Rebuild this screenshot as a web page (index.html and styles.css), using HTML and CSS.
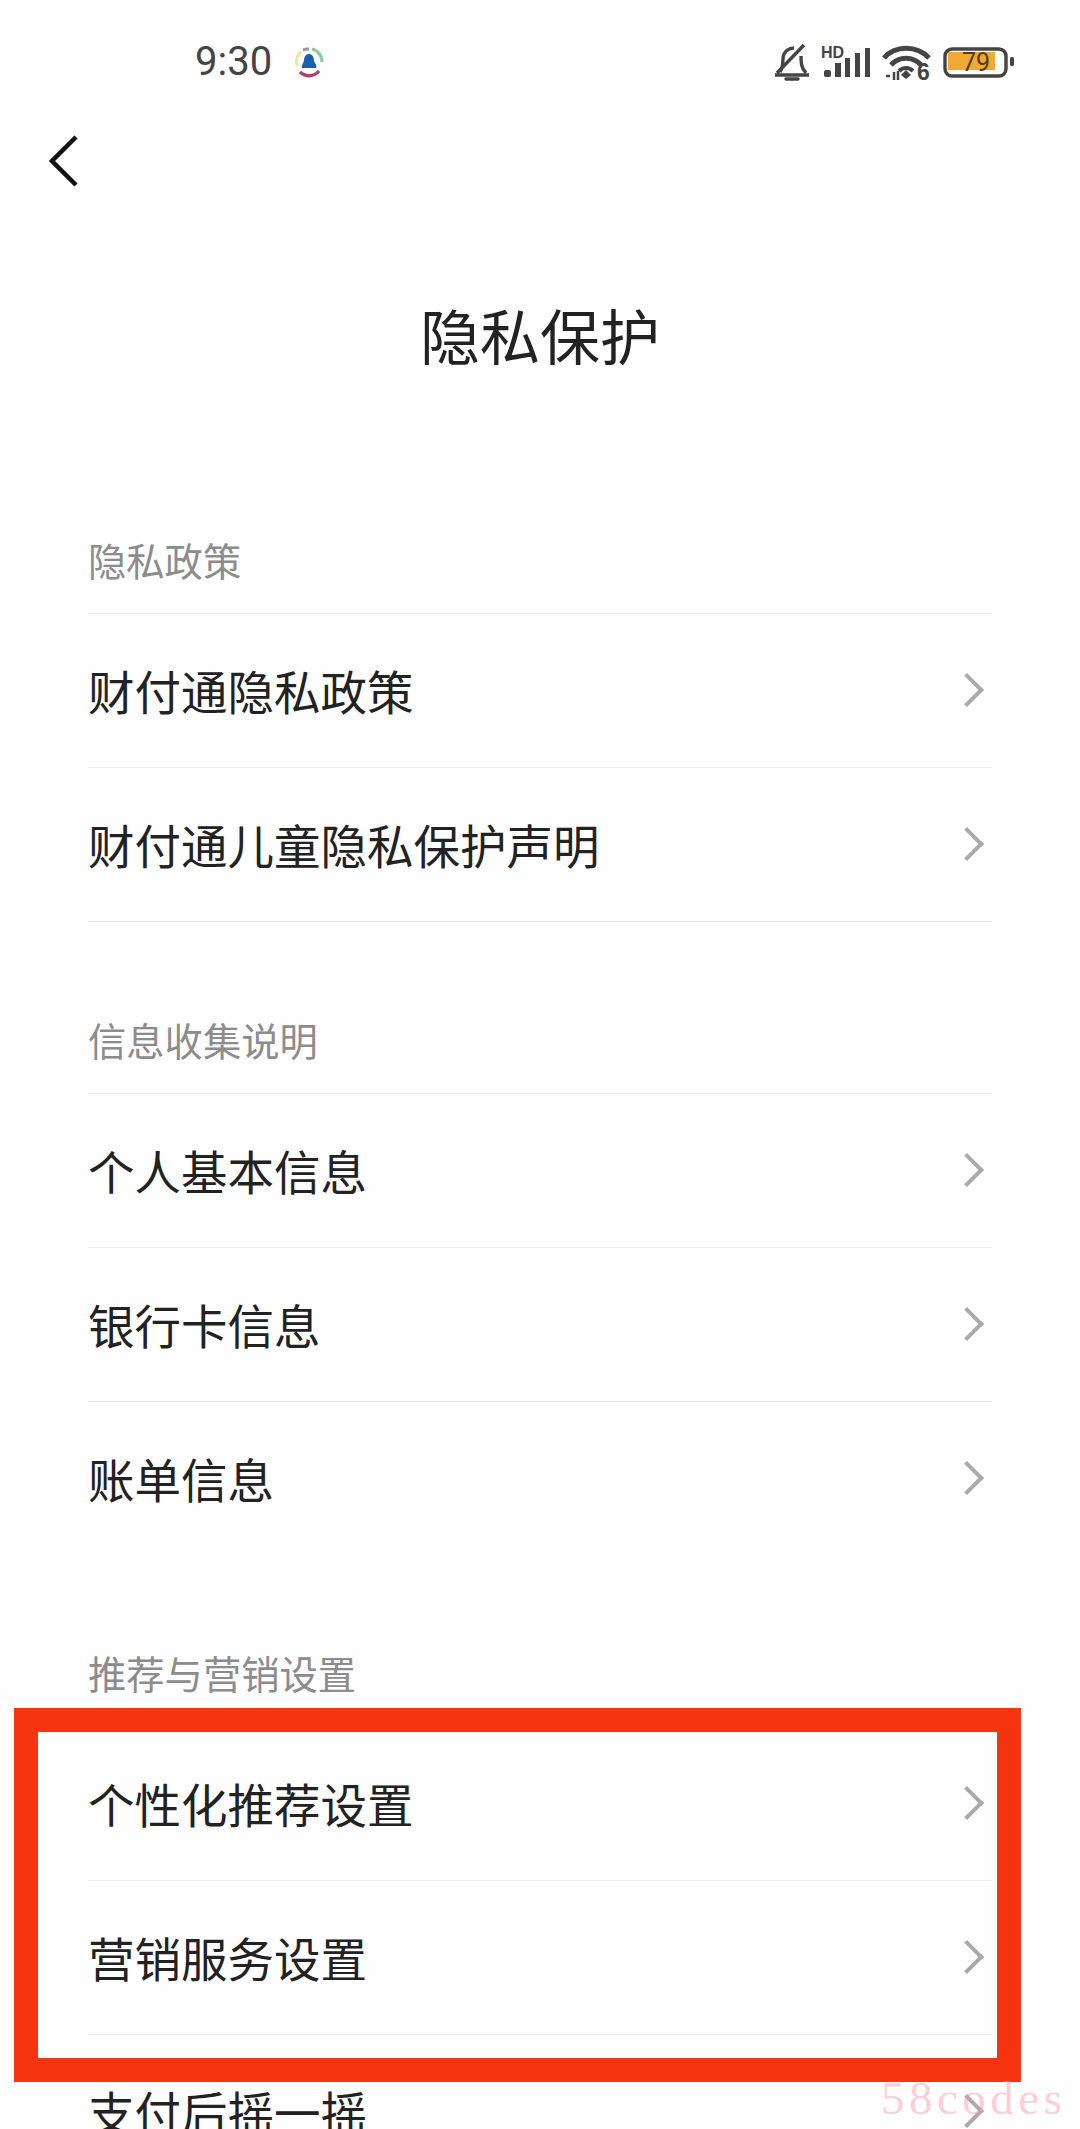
FILE: index.html
```html
<!DOCTYPE html>
<html lang="zh-CN">
<head>
    <meta charset="UTF-8">
    <meta name="viewport" content="width=device-width, initial-scale=1.0">
    <title>隐私保护</title>
    <link rel="stylesheet" href="styles.css">
</head>
<body>
    <div class="page">
        <div class="status-bar">
            <div class="status-left">
                <span class="time">9:30</span>
                <svg class="app-dot" width="34" height="34" viewBox="0 0 34 34" fill="none">
                    <path d="M5 21 A13 13 0 0 1 9 7" stroke="#f0e49a" stroke-width="3"/>
                    <path d="M11 5 A13 13 0 0 1 17 4" stroke="#9a9aa0" stroke-width="3"/>
                    <path d="M20 4 A13 13 0 0 1 30 17" stroke="#8cc9a0" stroke-width="3"/>
                    <path d="M8 27 A13 13 0 0 0 27 26" stroke="#b0406a" stroke-width="3.5"/>
                    <path d="M17 9 C21 9 22 13 22 16 C24 19 25 22 24 23 L10 23 C9 22 11 18 12 16 C12 13 13 9 17 9 Z" fill="#1f5fb0"/>
                </svg>
            </div>
            <div class="status-right">
                <svg width="36" height="46" viewBox="0 -3 36 46" fill="none" stroke="#444" stroke-width="3.4">
                    <path d="M6 30 C9 26 9 21 9 16 C10 9 15 6 20 6 M27 14 C27 20 27 26 32 31"/>
                    <path d="M1 33 H35"/>
                    <path d="M12 37 H24" stroke-linecap="round"/>
                    <path d="M30 3 L3 31"/>
                </svg>
                <svg width="50" height="46" viewBox="0 -3 50 46">
                    <text class="hd-text" x="0" y="16">HD</text>
                    <rect x="3" y="28" width="7" height="7" rx="2" fill="#444"/>
                    <rect x="14" y="21" width="6" height="14" fill="#444"/>
                    <rect x="24" y="16" width="5" height="19" fill="#444"/>
                    <rect x="34" y="11" width="5" height="24" fill="#444"/>
                    <rect x="44" y="6" width="5" height="29" fill="#444"/>
                </svg>
                <svg width="50" height="46" viewBox="0 -3 50 46" fill="none" stroke="#444" stroke-width="5">
                    <path d="M2 16 C13 3 35 3 47 16"/>
                    <path d="M9 23 C17 14 31 14 39 23"/>
                    <path d="M17 29 C21 25 27 25 31 29" stroke-width="4"/>
                    <path d="M19 33 L24 28 L29 33 L24 37 Z" fill="#444" stroke="none"/>
                    <path d="M4 34 H8 M12 30 V38 M16 29 V38" stroke-width="2.5"/>
                    <text class="wifi-six" x="35" y="38">6</text>
                </svg>
                <svg width="71" height="46" viewBox="0 -3 71 46" fill="none">
                    <rect x="5" y="10" width="47" height="18" fill="#f0a935"/>
                    <rect x="2" y="7" width="61" height="27" rx="7" stroke="#444" stroke-width="3.4"/>
                    <text class="batt-text" x="19" y="29">79</text>
                    <rect x="67" y="15" width="4" height="9" rx="1.5" fill="#444"/>
                </svg>
            </div>
        </div>

        <div class="nav">
            <svg width="30" height="54" viewBox="0 0 30 54" fill="none" stroke="#111" stroke-width="4.5">
                <path d="M27 2 L3 26 L27 50"/>
            </svg>
        </div>

        <h1 class="title">隐私保护</h1>

        <section class="group">
            <div class="group-label">隐私政策</div>
            <div class="row">财付通隐私政策<span class="arrow"></span></div>
            <div class="row">财付通儿童隐私保护声明<span class="arrow"></span></div>
        </section>

        <section class="group">
            <div class="group-label">信息收集说明</div>
            <div class="row">个人基本信息<span class="arrow"></span></div>
            <div class="row">银行卡信息<span class="arrow"></span></div>
            <div class="row no-line">账单信息<span class="arrow"></span></div>
        </section>

        <section class="group">
            <div class="group-label">推荐与营销设置</div>
            <div class="row">个性化推荐设置<span class="arrow"></span></div>
            <div class="row">营销服务设置<span class="arrow"></span></div>
            <div class="row no-line">支付后摇一摇<span class="arrow"></span></div>
        </section>

        <div class="red-frame"></div>
        <div class="watermark">58codes</div>
    </div>
</body>
</html>
```

FILE: styles.css
```css
body {
    margin: 0;
    background-color: #fefefe;
    font-family: "Noto Sans CJK SC", "Noto Sans", sans-serif;
    color: #222;
}
.page {
    position: relative;
    height: 2129px;
    overflow: hidden;
}
.status-bar {
    display: flex;
    justify-content: space-between;
    align-items: center;
    height: 124px;
    padding: 0 66px 0 195px;
}
.status-left {
    display: flex;
    align-items: center;
    gap: 20px;
}
.status-right {
    display: flex;
    align-items: center;
    gap: 11px;
}
.time {
    font-family: Roboto, sans-serif;
    font-size: 40px;
    line-height: 40px;
    color: #444;
}
.hd-text {
    font-family: "Liberation Sans", sans-serif;
    font-size: 16px;
    font-weight: bold;
    fill: #444;
}
.wifi-six {
    font-family: "Liberation Sans", sans-serif;
    font-size: 23px;
    font-weight: bold;
    fill: #444;
    stroke: none;
}
.batt-text {
    font-family: Roboto, sans-serif;
    font-size: 25px;
    fill: #5a3a10;
}
.nav {
    display: flex;
    align-items: center;
    height: 76px;
    padding-left: 49px;
}
.title {
    margin: 92px 0 159px;
    font-size: 60px;
    font-weight: 400;
    line-height: 84px;
    text-align: center;
}
.group {
    margin: 0 88px 93px;
}
.group-label {
    height: 50px;
    line-height: 50px;
    padding-bottom: 28px;
    font-size: 38.3px;
    color: #8c8c8c;
    border-bottom: 1px solid #ececec;
}
.row {
    display: flex;
    justify-content: space-between;
    align-items: center;
    height: 151px;
    padding-bottom: 2px;
    font-size: 46.5px;
    border-bottom: 1px solid #ececec;
}
.row.no-line {
    border-bottom: none;
}
.arrow {
    width: 20px;
    height: 20px;
    margin-right: 13px;
    border-top: 4px solid #aaa;
    border-right: 4px solid #aaa;
    transform: rotate(45deg);
}
.red-frame {
    position: absolute;
    left: 14px;
    top: 1708px;
    width: 959px;
    height: 326px;
    border: 24px solid #f63410;
}
.watermark {
    position: absolute;
    left: 881px;
    top: 2068px;
    font-family: "Liberation Serif", serif;
    font-size: 47px;
    line-height: 60px;
    letter-spacing: 4.5px;
    color: rgba(245, 150, 165, 0.45);
}
```
